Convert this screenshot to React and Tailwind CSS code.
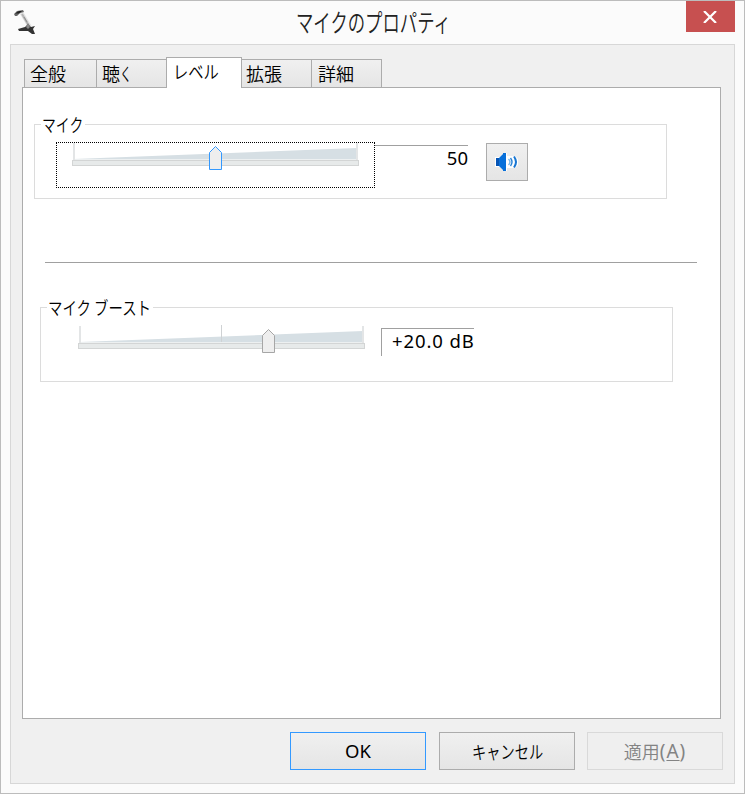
import React from "react";

function Label({ text, className = "" }) {
  return <span className={`inline-block origin-left whitespace-nowrap leading-[24px] ${className}`}>{text}</span>;
}

function Tab({ className, children }) {
  return (
    <div className={`shrink-0 border border-b-0 border-[#acacac] bg-gradient-to-b pl-[5px] ${className}`}>
      {children}
    </div>
  );
}

function Slider({ thumb, thumbStroke, middle }) {
  return (
    <svg className="block shrink-0" width="287" height="34" viewBox="0 0 287 34">
      <path d="M2 17L285 6V18H2Z" fill="#d6dfe4" />
      <path d="M1 1h2v17H1zM284 1h2v17h-2z" fill="#e3e5e6" />
      {middle && <path d="M143 0h1v18h-1z" fill="#cfd2d4" />}
      <path d="M3 17.5H284" stroke="#edf0f1" />
      <rect x=".5" y="18.5" width="286" height="5" fill="#e7eaea" stroke="#d3d5d5" />
      <path
        d={`M${thumb + 0.5} 10.5L${thumb + 6.5} 4.5L${thumb + 12.5} 10.5V27.5H${thumb + 0.5}Z`}
        fill="#eeeeee"
        stroke={thumbStroke}
      />
    </svg>
  );
}

function Button({ className, children }) {
  return <button className={`flex h-[38px] w-[136px] items-center justify-center border ${className}`}>{children}</button>;
}

export default function App() {
  return (
    <div className="flex h-[794px] w-[745px] flex-col overflow-hidden border border-[#bcbcbc] bg-[#fbfbfb] font-['Noto_Sans_CJK_JP',sans-serif] text-[18px] font-[350] text-black">
      <header className="flex h-[43px] shrink-0 items-start">
        <svg className="ml-[12px] mt-[8px] shrink-0" width="25" height="27" viewBox="0 0 25 27">
          <path d="M8 3L17 18" stroke="#e4e4e4" strokeWidth="4" />
          <path d="M9 5L16 17" stroke="#b4b4b4" strokeWidth="2" />
          <path d="M11 8L14 13" stroke="#888" strokeWidth=".8" />
          <path d="M1 5L4 2L10 1L11 3L7 4L4 7H2Z" fill="#666" />
          <path d="M2 4.5L6 2L9 2L6 4.5Z" fill="#222" />
          <path d="M5 20L12 18L15 15L18 18L22 17L20 20L22 25L19 25L15 22L6 22Z" fill="#333" />
          <path d="M13 18L15 14L17 18L15 20Z" fill="#888" />
        </svg>
        <div className="ml-[258px] mt-[9px] h-[30px] w-[153px] text-[23px] leading-[24px] text-[#222]">
          <Label text="マイクのプロパティ" className="-translate-y-px scale-x-[0.755] scale-y-[1.08]" />
        </div>
        <button className="ml-auto mr-[9px] flex h-[31px] w-[49px] items-center justify-center bg-[#c75050] pr-px">
          <svg width="14" height="12" viewBox="0 0 14 12">
            <path d="M1 0L13 12M13 0L1 12" stroke="white" strokeWidth="2.2" />
          </svg>
        </button>
      </header>

      <main className="ml-[9px] flex h-[740px] w-[725px] shrink-0 flex-col border border-[#d7d7d7] bg-[#f0f0f0]">
        <nav className="ml-[13px] flex h-[42px] shrink-0 items-end">
          <Tab className="h-[28px] w-[73px] from-[#f0f0f0] to-[#e5e5e5]"><Label text="全般" /></Tab>
          <Tab className="-ml-px h-[28px] w-[71px] from-[#f0f0f0] to-[#e5e5e5]">
            <Label text="聴" /><Label text="く" className="scale-x-[0.65]" />
          </Tab>
          <Tab className="z-10 -mb-px -ml-px h-[31px] w-[76px] from-white to-white pl-[6px]">
            <Label text="レベル" className="scale-x-[0.85]" />
          </Tab>
          <Tab className="h-[28px] w-[70px] border-l-0 from-[#f0f0f0] to-[#e5e5e5]">
            <Label text="拡張" className="-ml-[1px]" />
          </Tab>
          <Tab className="-ml-px h-[28px] w-[71px] from-[#f0f0f0] to-[#e5e5e5] pl-[6px]"><Label text="詳細" /></Tab>
        </nav>

        <section className="ml-[11px] h-[632px] w-[699px] shrink-0 border border-[#acacac] bg-white">
          <div className="relative ml-[11px] mt-[36px] flex h-[75px] w-[633px] items-start border border-[#dcdcdc]">
            <div className="absolute left-[6px] top-[-14px] h-[24px] w-[44px] bg-white pl-px">
              <Label text="マイク" className="scale-x-[0.77]" />
            </div>
            <div className="ml-[21px] mt-[17px] h-[46px] w-[319px] shrink-0 border border-dotted border-black pl-[15px]">
              <div className="-mt-px"><Slider thumb={137} thumbStroke="#3399ff" /></div>
            </div>
            <div className="mt-[20px] h-[27px] w-[93px] border-t border-[#a0a0a0] text-right font-['Noto_Sans',sans-serif] text-[18.5px] font-normal leading-[23px]">50</div>
            <button className="ml-[18px] mt-[18px] flex h-[38px] w-[42px] items-center justify-center border border-[#acacac] bg-gradient-to-b from-[#f0f0f0] to-[#e5e5e5]">
              <svg width="24" height="24" viewBox="0 0 24 24">
                <path d="M0 7h5l4-4h3v18H9l-4-4H0z" fill="white" />
                <path d="M12 6h8l3 3v6l-3 3h-8z" fill="white" />
                <path d="M1 8h4v8H1z" fill="#0755b5" />
                <path d="M4 8L8 4V3H11V21H8V20L4 16Z" fill="#0870da" />
                <path d="M13.5 9q3 3 0 6" fill="none" stroke="#78b8ee" strokeWidth="1.4" />
                <path d="M15.5 8q3 4 0 8" fill="none" stroke="#2b83d5" strokeWidth="1.4" />
                <path d="M19 6.5q4 5.5 0 11" fill="none" stroke="#1976d2" strokeWidth="2" />
              </svg>
            </button>
          </div>

          <div className="ml-[22px] mt-[63px] h-px w-[652px] bg-[#a0a0a0]" />

          <div className="relative ml-[17px] mt-[44px] flex h-[75px] w-[633px] items-start border border-[#dcdcdc]">
            <div className="absolute left-[6px] top-[-14px] h-[24px] w-[106px] bg-white pl-px">
              <Label text="マイク ブースト" className="scale-x-[0.8]" />
            </div>
            <div className="ml-[37px] mt-[17px]"><Slider thumb={184} thumbStroke="#a6a6a6" middle /></div>
            <div className="ml-[16px] mt-[20px] h-[28px] w-[93px] whitespace-nowrap border-l border-t border-[#a0a0a0] pl-[10px] font-['Noto_Sans',sans-serif] text-[18.5px] font-normal leading-[23px] tracking-[0.9px]">+20.0 dB</div>
          </div>
        </section>

        <footer className="ml-[279px] mt-[13px] flex">
          <Button className="border-[#3399ff] bg-gradient-to-b from-[#f0f0f0] to-[#e5e5e5] font-['Noto_Sans',sans-serif] text-[18.5px] font-normal">OK</Button>
          <Button className="ml-[13px] border-[#acacac] bg-gradient-to-b from-[#f0f0f0] to-[#e5e5e5]">
            <span className="flex w-[70px]"><Label text="キャンセル" className="scale-x-[0.79]" /></span>
          </Button>
          <Button className="ml-[12px] border-[#d9d9d9] bg-[#efefef] text-[#838383]">
            <span>適用</span><span className="font-['Noto_Sans',sans-serif] text-[19px] font-normal tracking-[1px]">(<u className="underline-offset-2">A</u>)</span>
          </Button>
        </footer>
      </main>
    </div>
  );
}
